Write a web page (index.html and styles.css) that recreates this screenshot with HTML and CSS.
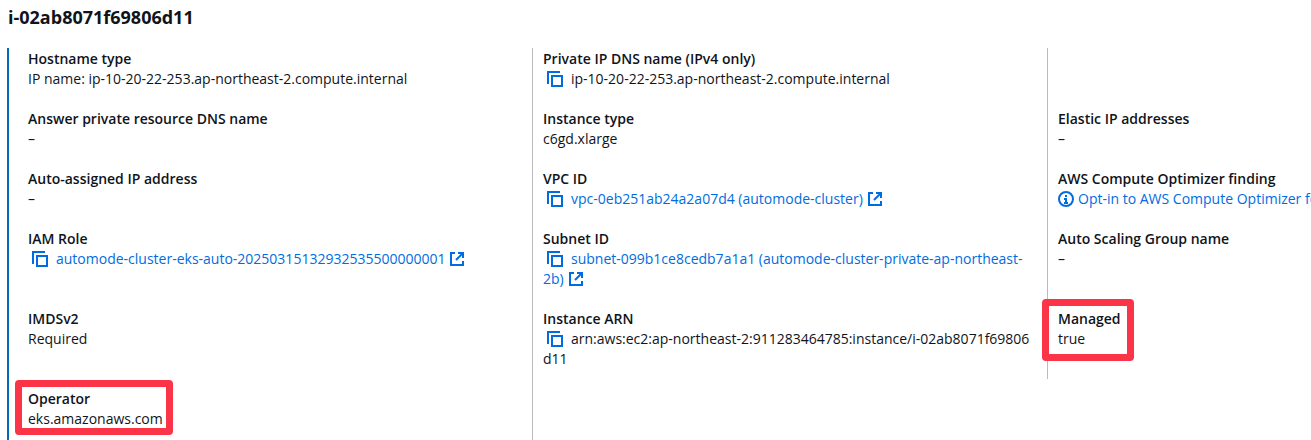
FILE: index.html
```
<!DOCTYPE html>
<html lang="en">
<head>
    <meta charset="UTF-8">
    <meta name="viewport" content="width=device-width, initial-scale=1.0">
    <title>Instance details</title>
    <link rel="stylesheet" href="styles.css">
</head>
<body>
    <svg class="sprite" aria-hidden="true">
        <symbol id="copy" viewBox="0 0 16 16">
            <path d="M1 13V1h12"/>
            <path d="M5 5h10v10H5z"/>
        </symbol>
        <symbol id="external" viewBox="0 0 16 16">
            <path d="M6 2H2v12h12v-4"/>
            <path d="M9 2h5v5M14 2L7 9"/>
        </symbol>
        <symbol id="info" viewBox="0 0 16 16">
            <circle cx="8" cy="8" r="7"/>
            <path d="M8 4v2M6 8h2v3M6 12h4"/>
        </symbol>
    </svg>

    <h2>i-02ab8071f69806d11</h2>
    <dl class="details">
        <div class="item">
            <dt>Hostname type</dt>
            <dd>IP name: ip-10-20-22-253.ap-northeast-2.compute.internal</dd>
        </div>
        <div class="item">
            <dt>Private IP DNS name (IPv4 only)</dt>
            <dd><button type="button" class="copy-btn" aria-label="Copy DNS name"><svg class="icon"><use href="#copy"/></svg></button>ip-10-20-22-253.ap-northeast-2.compute.internal</dd>
        </div>
        <div class="item"></div>

        <div class="item">
            <dt>Answer private resource DNS name</dt>
            <dd>–</dd>
        </div>
        <div class="item">
            <dt>Instance type</dt>
            <dd>c6gd.xlarge</dd>
        </div>
        <div class="item">
            <dt>Elastic IP addresses</dt>
            <dd>–</dd>
        </div>

        <div class="item">
            <dt>Auto-assigned IP address</dt>
            <dd>–</dd>
        </div>
        <div class="item">
            <dt>VPC ID</dt>
            <dd><button type="button" class="copy-btn" aria-label="Copy VPC ID"><svg class="icon"><use href="#copy"/></svg></button><a href="#">vpc-0eb251ab24a2a07d4 (automode-cluster)<svg class="icon icon-after"><use href="#external"/></svg></a></dd>
        </div>
        <div class="item">
            <dt>AWS Compute Optimizer finding</dt>
            <dd class="nowrap"><a href="#"><svg class="icon icon-before"><use href="#info"/></svg>Opt-in to AWS Compute Optimizer fo</a></dd>
        </div>

        <div class="item">
            <dt>IAM Role</dt>
            <dd><button type="button" class="copy-btn" aria-label="Copy IAM role"><svg class="icon"><use href="#copy"/></svg></button><a href="#">automode-cluster-eks-auto-20250315132932535500000001<svg class="icon icon-after"><use href="#external"/></svg></a></dd>
        </div>
        <div class="item">
            <dt>Subnet ID</dt>
            <dd><button type="button" class="copy-btn" aria-label="Copy subnet ID"><svg class="icon"><use href="#copy"/></svg></button><a href="#">subnet-099b1ce8cedb7a1a1 (automode-cluster-private-ap-northeast-2b)<svg class="icon icon-after"><use href="#external"/></svg></a></dd>
        </div>
        <div class="item">
            <dt>Auto Scaling Group name</dt>
            <dd>–</dd>
        </div>

        <div class="item">
            <dt>IMDSv2</dt>
            <dd>Required</dd>
        </div>
        <div class="item">
            <dt>Instance ARN</dt>
            <dd class="break"><button type="button" class="copy-btn" aria-label="Copy instance ARN"><svg class="icon"><use href="#copy"/></svg></button>arn:aws:ec2:ap-northeast-2:911283464785:instance/i-02ab8071f69806d11</dd>
        </div>
        <div class="item marked managed">
            <dt>Managed</dt>
            <dd>true</dd>
        </div>

        <div class="item marked operator">
            <dt>Operator</dt>
            <dd>eks.amazonaws.com</dd>
        </div>
        <div class="item"></div>
    </dl>
</body>
</html>
```

FILE: styles.css
```
* {
    box-sizing: border-box;
}
body {
    margin: 0;
    min-height: 100vh;
    display: flex;
    flex-direction: column;
    background-color: #fff;
    color: #0f141a;
    font-family: "Open Sans", "Noto Sans", sans-serif;
    font-size: 14px;
    line-height: 20px;
}
.sprite {
    display: none;
}
h2 {
    margin: 5px 8px 19px;
    font-size: 18px;
    line-height: 24px;
    font-weight: 700;
}
.details {
    flex: 1;
    display: grid;
    grid-template-columns: 39.8% 39.8% 1fr;
    grid-template-rows: repeat(5, auto) 1fr;
    margin: 0 0 0 7px;
    padding-left: 8px;
    border-left: 2px solid #0768b8;
}
.item {
    position: relative;
    min-width: 0;
    padding: 10px;
    border-left: 1px solid #bbb;
}
.item:nth-child(3n + 1) {
    border-left-color: transparent;
}
.item:nth-child(3n) {
    padding-right: 0;
}
.item:nth-child(-n + 3) {
    padding-top: 1px;
}
dt {
    font-weight: 600;
}
dd {
    margin: 0;
}
.nowrap {
    overflow: hidden;
    white-space: nowrap;
}
.break {
    word-break: break-all;
}
a {
    color: #006ce0;
    text-decoration: none;
}
.copy-btn {
    padding: 0;
    margin: 0 8px 0 4px;
    border: none;
    background: none;
    color: #006ce0;
    line-height: 16px;
    vertical-align: top;
    cursor: pointer;
}
.icon {
    width: 16px;
    height: 16px;
    margin-top: 2px;
    vertical-align: top;
    fill: none;
    stroke: currentColor;
    stroke-width: 2;
}
.icon-before {
    margin-right: 4px;
}
.icon-after {
    margin-left: 4px;
}
/* red frame over the fields to look at */
.marked::after {
    content: "";
    position: absolute;
    box-sizing: border-box;
    border: 7px solid #fb3448;
    border-radius: 4px;
}
.managed::after {
    top: 0;
    left: -6px;
    width: 92px;
    height: 62px;
}
.operator::after {
    top: 1px;
    left: -3px;
    width: 158px;
    height: 55px;
}
```
